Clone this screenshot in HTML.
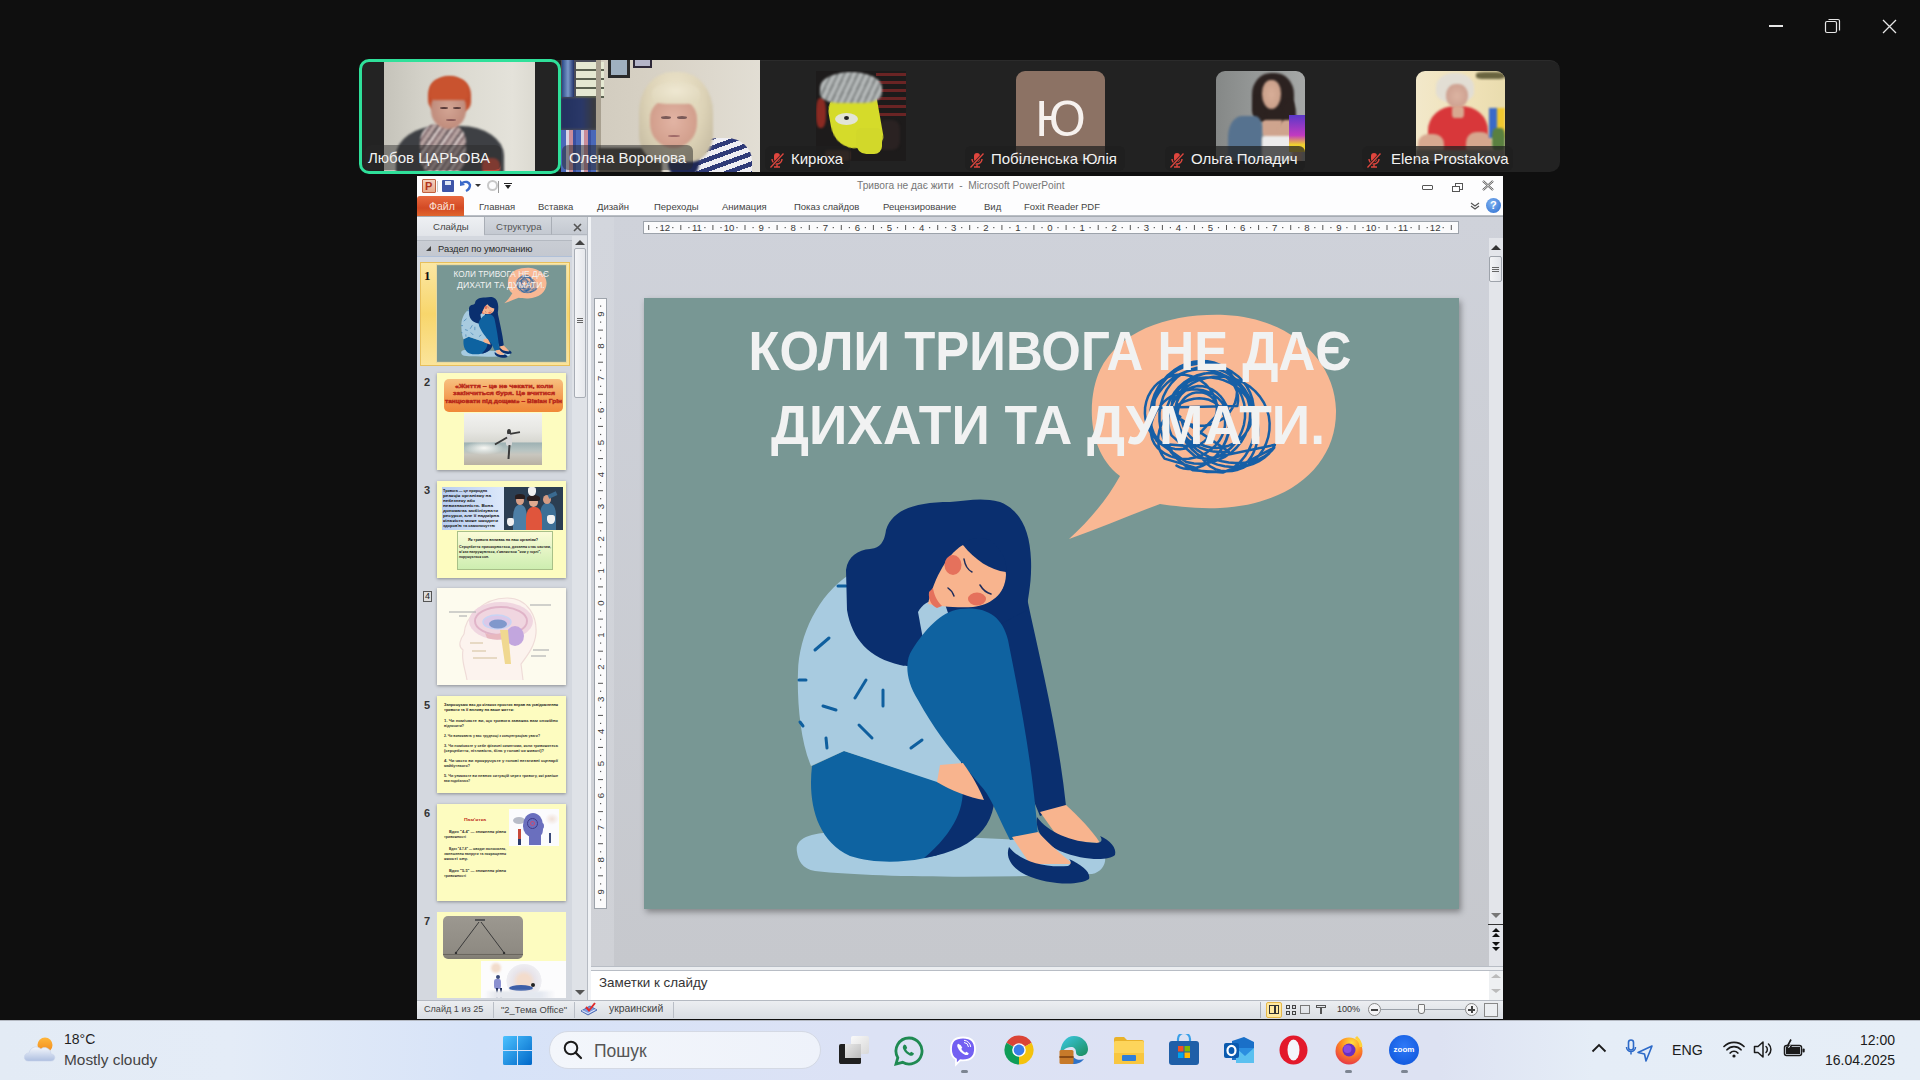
<!DOCTYPE html>
<html><head><meta charset="utf-8">
<style>
*{margin:0;padding:0;box-sizing:border-box}
html,body{width:1920px;height:1080px;overflow:hidden;background:#0f0f0f;font-family:"Liberation Sans",sans-serif;position:relative}
.a{position:absolute}
.lbl{position:absolute;height:25px;background:rgba(30,30,30,0.72);border-radius:6px;color:#f2f2f2;font-size:15px;line-height:25px;white-space:nowrap}
.mic{position:absolute;top:6px;left:4px;width:16px;height:16px}
.ribtab{position:absolute;top:200px;font-size:9.5px;color:#444;white-space:nowrap}
.num{position:absolute;left:424px;font-size:11px;font-weight:bold;color:#333}
.thumb{position:absolute;left:437px;width:129px;height:97px;background:#fdfcc0;box-shadow:0 1px 3px rgba(0,0,0,.35)}
</style></head><body>

<!-- window controls -->
<div class="a" style="left:1769px;top:25px;width:14px;height:1.5px;background:#e6e6e6"></div>
<svg class="a" style="left:1824px;top:17px" width="18" height="18" viewBox="0 0 18 18"><rect x="1.5" y="4.5" width="11" height="11" rx="1.5" fill="none" stroke="#e6e6e6" stroke-width="1.2"/><path d="M4.5 2.5h9.5a1.5 1.5 0 0 1 1.5 1.5v9.5" fill="none" stroke="#e6e6e6" stroke-width="1.2"/></svg>
<svg class="a" style="left:1882px;top:19px" width="15" height="15" viewBox="0 0 15 15"><path d="M1 1L14 14M14 1L1 14" stroke="#e6e6e6" stroke-width="1.3"/></svg>

<!-- participant panel -->
<div class="a" style="left:360px;top:60px;width:1200px;height:112px;background:#222;border-radius:10px;border-top:1px solid #2b2b2b"></div>

<!-- tile 1 -->
<div class="a" style="left:359px;top:59px;width:202px;height:115px;border:3px solid #2fe09a;border-radius:10px;background:#232323;overflow:hidden">
 <div class="a" style="left:22px;top:0;width:151px;height:109px;overflow:hidden"><div class="a" style="left:0px;top:0px;width:151px;height:109px;background:linear-gradient(90deg,#c5c3ba 0%,#d3d1c8 25%,#dddbd2 55%,#e4e2da 85%,#dcdad1 100%);border-radius:0;"></div><div class="a" style="left:12px;top:64px;width:108px;height:74px;background:#3e4044;border-radius:40% 40% 0 0;filter:blur(1px);"></div><div class="a" style="left:36px;top:62px;width:46px;height:51px;background:repeating-linear-gradient(125deg,#b8a4a2 0 4px,#5e5054 4px 6px,#d6c8c6 6px 9px,#7a6468 9px 11px);border-radius:35%;filter:blur(1.2px);"></div><div class="a" style="left:44px;top:14px;width:43px;height:37px;background:#c44e2c;border-radius:50% 50% 30% 35%;filter:blur(1px);"></div><div class="a" style="left:47px;top:30px;width:35px;height:37px;background:radial-gradient(ellipse at 50% 45%,#d3a594,#c08c7c 70%,#a87565);border-radius:40% 40% 50% 50%;filter:blur(0.8px);"></div><div class="a" style="left:46px;top:15px;width:38px;height:23px;background:#c9532f;border-radius:50% 50% 15% 15%;filter:blur(0.8px);"></div><div class="a" style="left:56px;top:45px;width:8px;height:2px;background:#5a3c3a;border-radius:50%;filter:blur(0.6px);"></div><div class="a" style="left:69px;top:45px;width:8px;height:2px;background:#5a3c3a;border-radius:50%;filter:blur(0.6px);"></div><div class="a" style="left:62px;top:57px;width:10px;height:2px;background:#8a5a58;border-radius:50%;filter:blur(0.6px);"></div><div class="a" style="left:98px;top:96px;width:18px;height:17px;background:#c74a3a;border-radius:40%;filter:blur(1px);"></div></div>
 <div class="lbl" style="left:3px;top:83px;width:136px;padding-left:3px;background:rgba(40,40,40,0.45)">Любов ЦАРЬОВА</div>
</div>
<!-- tile 2 -->
<div class="a" style="left:561px;top:60px;width:199px;height:112px;overflow:hidden"><div class="a" style="left:0px;top:0px;width:199px;height:112px;background:linear-gradient(90deg,#cfc9bc 0%,#d6d0c3 40%,#ddd8cd 75%,#e2ded4 100%);border-radius:0;"></div><div class="a" style="left:0px;top:0px;width:39px;height:112px;background:#4a4c58;border-radius:0;"></div><div class="a" style="left:1px;top:0px;width:12px;height:37px;background:linear-gradient(90deg,#2a4a88,#7a98c8 50%,#23336a);border-radius:0;filter:blur(0.5px);"></div><div class="a" style="left:15px;top:2px;width:28px;height:36px;background:repeating-linear-gradient(#e5e8d2 0 7px,#5a6050 7px 9px);border-radius:0;filter:blur(0.6px);"></div><div class="a" style="left:0px;top:38px;width:35px;height:31px;background:linear-gradient(90deg,#22305e,#2a3868 60%,#3a3a3a);border-radius:0;filter:blur(0.8px);"></div><div class="a" style="left:0px;top:70px;width:37px;height:42px;background:repeating-linear-gradient(90deg,#4a68b8 0 5px,#d8d4e4 5px 8px,#c88c9a 8px 12px,#3a50a0 12px 15px);border-radius:0;filter:blur(0.6px);"></div><div class="a" style="left:35px;top:0px;width:5px;height:112px;background:#a8a090;border-radius:0;filter:blur(0.6px);"></div><div class="a" style="left:47px;top:0px;width:22px;height:18px;background:#2a2a2a;border-radius:0;filter:blur(0.4px);"></div><div class="a" style="left:50px;top:0px;width:16px;height:15px;background:#9fb0c0;border-radius:0;filter:blur(0.5px);"></div><div class="a" style="left:72px;top:0px;width:19px;height:8px;background:#2e2838;border-radius:0;filter:blur(0.4px);"></div><div class="a" style="left:74px;top:0px;width:15px;height:6px;background:#b4b4c8;border-radius:0;filter:blur(0.5px);"></div><div class="a" style="left:37px;top:88px;width:64px;height:28px;background:#45413b;border-radius:0;filter:blur(1.2px);"></div><div class="a" style="left:129px;top:78px;width:62px;height:57px;background:repeating-linear-gradient(160deg,#efeef3 0 5px,#2f3a78 5px 9.5px);border-radius:45% 40% 0 0;filter:blur(0.7px);"></div><div class="a" style="left:107px;top:74px;width:31px;height:42px;background:#1f2856;border-radius:30%;filter:blur(0.9px);"></div><div class="a" style="left:78px;top:12px;width:74px;height:90px;background:radial-gradient(ellipse at 50% 30%,#efe7ce,#dcd2b6 55%,#c8bea4 85%);border-radius:45% 45% 30% 30%;filter:blur(1.2px);"></div><div class="a" style="left:89px;top:39px;width:47px;height:49px;background:radial-gradient(ellipse at 50% 45%,#e2b4a4,#d3a08e 65%,#bf8c7c);border-radius:40% 40% 50% 50%;filter:blur(0.9px);"></div><div class="a" style="left:91px;top:22px;width:48px;height:22px;background:radial-gradient(ellipse at 50% 40%,#efe8d2,#ddd4b8);border-radius:50% 50% 30% 30%;filter:blur(0.9px);"></div><div class="a" style="left:100px;top:56px;width:10px;height:3px;background:#7a5a58;border-radius:50%;filter:blur(0.6px);"></div><div class="a" style="left:116px;top:56px;width:10px;height:3px;background:#7a5a58;border-radius:50%;filter:blur(0.6px);"></div><div class="a" style="left:107px;top:75px;width:12px;height:2px;background:#a06a68;border-radius:50%;filter:blur(0.6px);"></div></div>
<div class="lbl" style="left:562px;top:145px;width:131px;padding-left:7px;background:rgba(40,40,40,0.5)">Олена Воронова</div>
<!-- avatar 3 -->
<div class="a" style="left:816px;top:71px;width:90px;height:90px;overflow:hidden"><div class="a" style="left:0px;top:0px;width:90px;height:90px;background:#1d1b1b;border-radius:0;"></div><div class="a" style="left:0px;top:27px;width:10px;height:30px;background:#8a2a22;border-radius:40%;filter:blur(1px);"></div><div class="a" style="left:60px;top:2px;width:30px;height:45px;background:repeating-linear-gradient(#6a2424 0 3px,#1d1b1b 3px 8px);border-radius:0;filter:blur(0.6px);"></div><div class="a" style="left:61px;top:49px;width:23px;height:30px;background:#2a2222;border-radius:30%;filter:blur(1px);"></div><div class="a" style="left:14px;top:19px;width:50px;height:58px;background:#d5db2a;border-radius:35% 25% 15% 45%;filter:blur(0.6px);transform:rotate(-10deg);"></div><div class="a" style="left:40px;top:57px;width:26px;height:26px;background:#d2d82a;border-radius:20% 20% 30% 40%;filter:blur(0.6px);"></div><div class="a" style="left:4px;top:1px;width:62px;height:31px;background:repeating-linear-gradient(115deg,#b4b8b8 0 4px,#7e8282 4px 6px);border-radius:50% 50% 30% 30%;filter:blur(0.8px);"></div><div class="a" style="left:19px;top:42px;width:23px;height:12px;background:#e2e4d6;border-radius:50%;filter:blur(0.6px);"></div><div class="a" style="left:28px;top:45px;width:5px;height:4px;background:#222;border-radius:50%;"></div><div class="a" style="left:9px;top:79px;width:25px;height:11px;background:#5a3a30;border-radius:20%;filter:blur(1px);"></div></div>
<div class="lbl" style="left:765px;top:146px;width:85px;padding-left:26px"><svg class="mic" viewBox="0 0 16 16"><rect x="5" y="1" width="6" height="9" rx="3" fill="#e0463e"/><path d="M3 7a5 5 0 0 0 10 0M8 12v3M5 15h6" stroke="#e0463e" stroke-width="1.4" fill="none"/><path d="M1.5 15.5L14.5 1.5" stroke="#1f1f1f" stroke-width="2.6"/><path d="M1.5 15.5L14.5 1.5" stroke="#e0463e" stroke-width="1.3"/></svg>Кирюха</div><!-- avatar 4 -->
<div class="a" style="left:1016px;top:71px;width:89px;height:90px;background:#8c7264;border-radius:9px 9px 0 0;color:#f6f1ee;font-size:50px;text-align:center;line-height:96px">Ю</div>
<div class="lbl" style="left:965px;top:146px;width:160px;padding-left:26px"><svg class="mic" viewBox="0 0 16 16"><rect x="5" y="1" width="6" height="9" rx="3" fill="#e0463e"/><path d="M3 7a5 5 0 0 0 10 0M8 12v3M5 15h6" stroke="#e0463e" stroke-width="1.4" fill="none"/><path d="M1.5 15.5L14.5 1.5" stroke="#1f1f1f" stroke-width="2.6"/><path d="M1.5 15.5L14.5 1.5" stroke="#e0463e" stroke-width="1.3"/></svg>Побіленська Юлія</div><!-- avatar 5 -->
<div class="a" style="left:1216px;top:71px;width:89px;height:90px;border-radius:9px 9px 0 0;overflow:hidden"><div class="a" style="left:0px;top:0px;width:89px;height:90px;background:linear-gradient(90deg,#858887,#959897 45%,#a6a8a7 100%);border-radius:0;"></div><div class="a" style="left:46px;top:37px;width:28px;height:32px;background:#cfa48e;border-radius:30%;filter:blur(1px);"></div><div class="a" style="left:36px;top:2px;width:42px;height:47px;background:#2c2220;border-radius:45% 45% 20% 20%;filter:blur(1.2px);"></div><div class="a" style="left:66px;top:29px;width:14px;height:36px;background:#2c2220;border-radius:40%;filter:blur(1.2px);"></div><div class="a" style="left:38px;top:25px;width:12px;height:26px;background:#2c2220;border-radius:40%;filter:blur(1.2px);"></div><div class="a" style="left:46px;top:9px;width:19px;height:29px;background:radial-gradient(#d8ae98,#c49a84);border-radius:45% 45% 50% 50%;filter:blur(0.8px);"></div><div class="a" style="left:12px;top:45px;width:34px;height:54px;background:#56728f;border-radius:40% 20% 0 0;filter:blur(1.2px);"></div><div class="a" style="left:62px;top:49px;width:24px;height:50px;background:#cfa48e;border-radius:30%;filter:blur(1.2px);"></div><div class="a" style="left:46px;top:65px;width:30px;height:34px;background:#ecebeb;border-radius:10%;filter:blur(1px);"></div><div class="a" style="left:73px;top:44px;width:16px;height:37px;background:linear-gradient(#5a38c8,#c23ac0 55%,#f0d030 80%);border-radius:0;filter:blur(0.7px);"></div></div>
<div class="lbl" style="left:1165px;top:146px;width:140px;padding-left:26px"><svg class="mic" viewBox="0 0 16 16"><rect x="5" y="1" width="6" height="9" rx="3" fill="#e0463e"/><path d="M3 7a5 5 0 0 0 10 0M8 12v3M5 15h6" stroke="#e0463e" stroke-width="1.4" fill="none"/><path d="M1.5 15.5L14.5 1.5" stroke="#1f1f1f" stroke-width="2.6"/><path d="M1.5 15.5L14.5 1.5" stroke="#e0463e" stroke-width="1.3"/></svg>Ольга Поладич</div><!-- avatar 6 -->
<div class="a" style="left:1416px;top:71px;width:89px;height:90px;border-radius:9px 9px 0 0;overflow:hidden"><div class="a" style="left:0px;top:0px;width:89px;height:90px;background:linear-gradient(90deg,#f2e8ca,#f0e2b8 60%,#e9dcae);border-radius:0;"></div><div class="a" style="left:60px;top:1px;width:29px;height:7px;background:#6a6440;border-radius:30%;filter:blur(1px);"></div><div class="a" style="left:12px;top:35px;width:60px;height:54px;background:#d8373a;border-radius:45% 45% 10% 10%;filter:blur(1.2px);"></div><div class="a" style="left:2px;top:63px;width:26px;height:24px;background:#d8a890;border-radius:40%;filter:blur(1.2px);"></div><div class="a" style="left:50px;top:61px;width:26px;height:26px;background:#d6a68e;border-radius:40%;filter:blur(1.2px);"></div><div class="a" style="left:20px;top:2px;width:38px;height:29px;background:#e2ded4;border-radius:48% 48% 35% 35%;filter:blur(1.2px);"></div><div class="a" style="left:30px;top:13px;width:22px;height:24px;background:radial-gradient(#dcb4a2,#c8998a);border-radius:45% 45% 50% 50%;filter:blur(0.8px);"></div><div class="a" style="left:36px;top:35px;width:12px;height:12px;background:#d8a890;border-radius:30%;filter:blur(1px);"></div><div class="a" style="left:73px;top:37px;width:16px;height:30px;background:linear-gradient(90deg,#3a6ac8 50%,#f0c830 50%);border-radius:0;filter:blur(1px);"></div><div class="a" style="left:76px;top:57px;width:13px;height:24px;background:#5a8040;border-radius:30%;filter:blur(1px);"></div><div class="a" style="left:0px;top:79px;width:89px;height:15px;background:#8c8272;border-radius:0;filter:blur(1px);"></div></div>
<div class="lbl" style="left:1362px;top:146px;width:151px;padding-left:29px"><svg class="mic" viewBox="0 0 16 16"><rect x="5" y="1" width="6" height="9" rx="3" fill="#e0463e"/><path d="M3 7a5 5 0 0 0 10 0M8 12v3M5 15h6" stroke="#e0463e" stroke-width="1.4" fill="none"/><path d="M1.5 15.5L14.5 1.5" stroke="#1f1f1f" stroke-width="2.6"/><path d="M1.5 15.5L14.5 1.5" stroke="#e0463e" stroke-width="1.3"/></svg>Elena Prostakova</div>

<!-- PowerPoint window -->
<div class="a" id="ppt" style="left:417px;top:176px;width:1086px;height:843px;background:#d2d6de;overflow:hidden">
 <!-- title bar + tabs -->
 <div class="a" style="left:0;top:0;width:1086px;height:41px;background:#fdfdfe"></div>
 <div class="a" style="left:0;top:39px;width:1086px;height:2px;background:linear-gradient(#c4c8ce,#9da2aa)"></div>
 <!-- QAT -->
 <div class="a" style="left:5px;top:3px;width:14px;height:14px;background:linear-gradient(#f3d2c0,#e9a98a);border:1px solid #c0603e;border-radius:1px"></div>
 <div class="a" style="left:8px;top:3px;font-size:11px;font-weight:bold;color:#b3331a;line-height:14px">P</div>
 <div class="a" style="left:20px;top:5px;width:1px;height:11px;background:#c7c7c7"></div>
 <div class="a" style="left:25px;top:4px;width:12px;height:12px;background:#3e55a8;border-radius:1px"></div>
 <div class="a" style="left:28px;top:5px;width:6px;height:4px;background:#dfe6f5"></div>
 <svg class="a" style="left:42px;top:3px" width="14" height="14" viewBox="0 0 14 14"><path d="M3 4 Q9 1 11 6 Q11 10 7 12" fill="none" stroke="#3a69c9" stroke-width="2.4"/><path d="M1 1 L1 7 L6 6 Z" fill="#3a69c9"/></svg>
 <div class="a" style="left:58px;top:8px;width:0;height:0;border-left:3px solid transparent;border-right:3px solid transparent;border-top:3px solid #333"></div>
 <div class="a" style="left:70px;top:4px;width:11px;height:11px;border:2.5px solid #c8c8c8;border-radius:50%"></div>
 <div class="a" style="left:81px;top:5px;width:1px;height:12px;background:#999"></div>
 <div class="a" style="left:87px;top:7px;width:8px;height:1px;background:#222"></div>
 <div class="a" style="left:88px;top:9px;width:0;height:0;border-left:3px solid transparent;border-right:3px solid transparent;border-top:4px solid #222"></div>
 <div class="a" style="left:440px;top:4px;font-size:10.2px;color:#777;white-space:nowrap">Тривога не дає жити &nbsp;- &nbsp;Microsoft PowerPoint</div>
 <!-- window buttons -->
 <div class="a" style="left:1005px;top:9px;width:11px;height:5px;border:1px solid #555;border-radius:1px"></div>
 <div class="a" style="left:1038px;top:7px;width:8px;height:7px;border:1px solid #555"></div>
 <div class="a" style="left:1035px;top:10px;width:8px;height:6px;border:1px solid #555;background:#fdfdfe"></div>
 <svg class="a" style="left:1065px;top:4px" width="12" height="11" viewBox="0 0 12 11"><path d="M1 1L11 10M11 1L1 10" stroke="#555" stroke-width="2.2"/><path d="M1 1L11 10M11 1L1 10" stroke="#fff" stroke-width="0.8"/></svg>
 <!-- tabs -->
 <div class="a" style="left:0;top:20px;width:47px;height:20px;background:linear-gradient(#e8693f,#d34a24 60%,#e0662d);border-radius:3px 3px 0 0"></div>
 <div class="a" style="left:12px;top:24px;font-size:10.5px;color:#fbe3d8">Файл</div>
 <div class="ribtab" style="margin-top:1px;left:62px;top:24px">Главная</div>
 <div class="ribtab" style="margin-top:1px;left:121px;top:24px">Вставка</div>
 <div class="ribtab" style="margin-top:1px;left:180px;top:24px">Дизайн</div>
 <div class="ribtab" style="margin-top:1px;left:237px;top:24px">Переходы</div>
 <div class="ribtab" style="margin-top:1px;left:305px;top:24px">Анимация</div>
 <div class="ribtab" style="margin-top:1px;left:377px;top:24px">Показ слайдов</div>
 <div class="ribtab" style="margin-top:1px;left:466px;top:24px">Рецензирование</div>
 <div class="ribtab" style="margin-top:1px;left:567px;top:24px">Вид</div>
 <div class="ribtab" style="margin-top:1px;left:607px;top:24px">Foxit Reader PDF</div>
 <svg class="a" style="left:1053px;top:25px" width="10" height="10" viewBox="0 0 10 10"><path d="M1 2L5 5L9 2M1 5L5 8L9 5" fill="none" stroke="#555" stroke-width="1.2"/></svg>
 <div class="a" style="left:1069px;top:22px;width:15px;height:15px;border-radius:50%;background:radial-gradient(circle at 40% 35%,#7fb2f0,#2a6cd0)"></div>
 <div class="a" style="left:1073px;top:23px;font-size:11px;font-weight:bold;color:#fff">?</div>

 <!-- left panel -->
 <div class="a" style="left:0;top:41px;width:170px;height:783px;background:#d4d8df"></div>
 <div class="a" style="left:0;top:41px;width:67px;height:19px;background:linear-gradient(#eef0f3,#e1e4e9)"></div>
 <div class="a" style="left:67px;top:41px;width:68px;height:18px;background:linear-gradient(#d3d7dd,#c4c9d1);border-left:1px solid #a9aeb6;border-right:1px solid #a9aeb6;border-bottom:1px solid #b3b8c0"></div>
 <div class="a" style="left:135px;top:41px;width:35px;height:18px;background:linear-gradient(#d3d7dd,#c4c9d1);border-bottom:1px solid #b3b8c0"></div>
 <div class="a" style="left:16px;top:45px;font-size:9.6px;color:#444">Слайды</div>
 <div class="a" style="left:79px;top:45px;font-size:9.6px;color:#555">Структура</div>
 <svg class="a" style="left:156px;top:47px" width="9" height="9" viewBox="0 0 9 9"><path d="M1 1L8 8M8 1L1 8" stroke="#555" stroke-width="1.6"/></svg>
 <div class="a" style="left:0;top:64px;width:155px;height:17px;background:linear-gradient(#c9cdd4,#c4c8d0);border-top:1px solid #b4b9c1;border-bottom:1px solid #b0c0d8"></div>
 <div class="a" style="left:9px;top:70px;width:0;height:0;border-left:5px solid transparent;border-bottom:5px solid #444"></div>
 <div class="a" style="left:21px;top:68px;font-size:9.3px;color:#2a2a2a;white-space:nowrap">Раздел по умолчанию</div>
 <!-- slides scrollbar -->
 <div class="a" style="left:155px;top:60px;width:15px;height:764px;background:#dfe2e7"></div>
 <div class="a" style="left:158px;top:64px;width:0;height:0;border-left:5px solid transparent;border-right:5px solid transparent;border-bottom:5px solid #444"></div>
 <div class="a" style="left:157px;top:72px;width:12px;height:150px;background:linear-gradient(90deg,#f4f5f7,#e6e8ec);border:1px solid #a8adb5;border-radius:2px"></div>
 <div class="a" style="left:160px;top:142px;width:6px;height:1px;background:#666;box-shadow:0 2px 0 #666,0 4px 0 #666"></div>
 <div class="a" style="left:158px;top:814px;width:0;height:0;border-left:5px solid transparent;border-right:5px solid transparent;border-top:5px solid #555"></div>
 <div class="a" style="left:170px;top:41px;width:4px;height:783px;background:#f1f3f6;border-left:1px solid #b6bbc3"></div>

 <!-- main area -->
 <div class="a" style="left:174px;top:41px;width:912px;height:749px;background:linear-gradient(#cfd2da,#c6c8cd)"></div>
 <div class="a" style="left:174px;top:41px;width:23px;height:749px;background:linear-gradient(#d3d6dd,#cfd1d6)"></div>
 <!-- rulers -->
 <div class="a" id="hruler" style="left:226px;top:45px;width:816px;height:13px;background:#fbfbfc;border:1px solid #9da3ab"></div>
 <div class="a" id="vruler" style="left:177px;top:122px;width:13px;height:611px;background:#fbfbfc;border:1px solid #9da3ab"></div>
 <svg class="a" style="left:227px;top:46px" width="814" height="11" font-family="Liberation Sans" font-size="9.6" fill="#3a3a3a"><rect x="4.2" y="3" width="1" height="5" fill="#555"/><rect x="12.2" y="5" width="1.2" height="1.2" fill="#555"/><text x="20.8" y="9.3" text-anchor="middle">12</text><rect x="28.2" y="5" width="1.2" height="1.2" fill="#555"/><rect x="36.3" y="3" width="1" height="5" fill="#555"/><rect x="44.3" y="5" width="1.2" height="1.2" fill="#555"/><text x="52.9" y="9.3" text-anchor="middle">11</text><rect x="60.3" y="5" width="1.2" height="1.2" fill="#555"/><rect x="68.4" y="3" width="1" height="5" fill="#555"/><rect x="76.4" y="5" width="1.2" height="1.2" fill="#555"/><text x="85.0" y="9.3" text-anchor="middle">10</text><rect x="92.4" y="5" width="1.2" height="1.2" fill="#555"/><rect x="100.5" y="3" width="1" height="5" fill="#555"/><rect x="108.5" y="5" width="1.2" height="1.2" fill="#555"/><text x="117.1" y="9.3" text-anchor="middle">9</text><rect x="124.5" y="5" width="1.2" height="1.2" fill="#555"/><rect x="132.6" y="3" width="1" height="5" fill="#555"/><rect x="140.6" y="5" width="1.2" height="1.2" fill="#555"/><text x="149.2" y="9.3" text-anchor="middle">8</text><rect x="156.6" y="5" width="1.2" height="1.2" fill="#555"/><rect x="164.8" y="3" width="1" height="5" fill="#555"/><rect x="172.7" y="5" width="1.2" height="1.2" fill="#555"/><text x="181.3" y="9.3" text-anchor="middle">7</text><rect x="188.7" y="5" width="1.2" height="1.2" fill="#555"/><rect x="196.8" y="3" width="1" height="5" fill="#555"/><rect x="204.8" y="5" width="1.2" height="1.2" fill="#555"/><text x="213.4" y="9.3" text-anchor="middle">6</text><rect x="220.8" y="5" width="1.2" height="1.2" fill="#555"/><rect x="228.9" y="3" width="1" height="5" fill="#555"/><rect x="236.9" y="5" width="1.2" height="1.2" fill="#555"/><text x="245.5" y="9.3" text-anchor="middle">5</text><rect x="252.9" y="5" width="1.2" height="1.2" fill="#555"/><rect x="261.1" y="3" width="1" height="5" fill="#555"/><rect x="269.0" y="5" width="1.2" height="1.2" fill="#555"/><text x="277.6" y="9.3" text-anchor="middle">4</text><rect x="285.0" y="5" width="1.2" height="1.2" fill="#555"/><rect x="293.2" y="3" width="1" height="5" fill="#555"/><rect x="301.1" y="5" width="1.2" height="1.2" fill="#555"/><text x="309.7" y="9.3" text-anchor="middle">3</text><rect x="317.1" y="5" width="1.2" height="1.2" fill="#555"/><rect x="325.2" y="3" width="1" height="5" fill="#555"/><rect x="333.2" y="5" width="1.2" height="1.2" fill="#555"/><text x="341.8" y="9.3" text-anchor="middle">2</text><rect x="349.2" y="5" width="1.2" height="1.2" fill="#555"/><rect x="357.4" y="3" width="1" height="5" fill="#555"/><rect x="365.3" y="5" width="1.2" height="1.2" fill="#555"/><text x="373.9" y="9.3" text-anchor="middle">1</text><rect x="381.3" y="5" width="1.2" height="1.2" fill="#555"/><rect x="389.4" y="3" width="1" height="5" fill="#555"/><rect x="397.4" y="5" width="1.2" height="1.2" fill="#555"/><text x="406.0" y="9.3" text-anchor="middle">0</text><rect x="413.4" y="5" width="1.2" height="1.2" fill="#555"/><rect x="421.6" y="3" width="1" height="5" fill="#555"/><rect x="429.5" y="5" width="1.2" height="1.2" fill="#555"/><text x="438.1" y="9.3" text-anchor="middle">1</text><rect x="445.5" y="5" width="1.2" height="1.2" fill="#555"/><rect x="453.7" y="3" width="1" height="5" fill="#555"/><rect x="461.6" y="5" width="1.2" height="1.2" fill="#555"/><text x="470.2" y="9.3" text-anchor="middle">2</text><rect x="477.6" y="5" width="1.2" height="1.2" fill="#555"/><rect x="485.8" y="3" width="1" height="5" fill="#555"/><rect x="493.7" y="5" width="1.2" height="1.2" fill="#555"/><text x="502.3" y="9.3" text-anchor="middle">3</text><rect x="509.7" y="5" width="1.2" height="1.2" fill="#555"/><rect x="517.9" y="3" width="1" height="5" fill="#555"/><rect x="525.8" y="5" width="1.2" height="1.2" fill="#555"/><text x="534.4" y="9.3" text-anchor="middle">4</text><rect x="541.8" y="5" width="1.2" height="1.2" fill="#555"/><rect x="549.9" y="3" width="1" height="5" fill="#555"/><rect x="557.9" y="5" width="1.2" height="1.2" fill="#555"/><text x="566.5" y="9.3" text-anchor="middle">5</text><rect x="573.9" y="5" width="1.2" height="1.2" fill="#555"/><rect x="582.0" y="3" width="1" height="5" fill="#555"/><rect x="590.0" y="5" width="1.2" height="1.2" fill="#555"/><text x="598.6" y="9.3" text-anchor="middle">6</text><rect x="606.0" y="5" width="1.2" height="1.2" fill="#555"/><rect x="614.1" y="3" width="1" height="5" fill="#555"/><rect x="622.1" y="5" width="1.2" height="1.2" fill="#555"/><text x="630.7" y="9.3" text-anchor="middle">7</text><rect x="638.1" y="5" width="1.2" height="1.2" fill="#555"/><rect x="646.2" y="3" width="1" height="5" fill="#555"/><rect x="654.2" y="5" width="1.2" height="1.2" fill="#555"/><text x="662.8" y="9.3" text-anchor="middle">8</text><rect x="670.2" y="5" width="1.2" height="1.2" fill="#555"/><rect x="678.3" y="3" width="1" height="5" fill="#555"/><rect x="686.3" y="5" width="1.2" height="1.2" fill="#555"/><text x="694.9" y="9.3" text-anchor="middle">9</text><rect x="702.3" y="5" width="1.2" height="1.2" fill="#555"/><rect x="710.5" y="3" width="1" height="5" fill="#555"/><rect x="718.4" y="5" width="1.2" height="1.2" fill="#555"/><text x="727.0" y="9.3" text-anchor="middle">10</text><rect x="734.4" y="5" width="1.2" height="1.2" fill="#555"/><rect x="742.5" y="3" width="1" height="5" fill="#555"/><rect x="750.5" y="5" width="1.2" height="1.2" fill="#555"/><text x="759.1" y="9.3" text-anchor="middle">11</text><rect x="766.5" y="5" width="1.2" height="1.2" fill="#555"/><rect x="774.6" y="3" width="1" height="5" fill="#555"/><rect x="782.6" y="5" width="1.2" height="1.2" fill="#555"/><text x="791.2" y="9.3" text-anchor="middle">12</text><rect x="798.6" y="5" width="1.2" height="1.2" fill="#555"/><rect x="806.8" y="3" width="1" height="5" fill="#555"/></svg>
<svg class="a" style="left:178px;top:123px" width="11" height="609" font-family="Liberation Sans" font-size="9.6" fill="#3a3a3a"><rect x="5" y="6.5" width="1.2" height="1.2" fill="#555"/><text x="0" y="0" transform="translate(9.3 15.1) rotate(-90)" text-anchor="middle">9</text><rect x="5" y="22.5" width="1.2" height="1.2" fill="#555"/><rect x="3" y="30.6" width="5" height="1" fill="#555"/><rect x="5" y="38.6" width="1.2" height="1.2" fill="#555"/><text x="0" y="0" transform="translate(9.3 47.2) rotate(-90)" text-anchor="middle">8</text><rect x="5" y="54.6" width="1.2" height="1.2" fill="#555"/><rect x="3" y="62.7" width="5" height="1" fill="#555"/><rect x="5" y="70.7" width="1.2" height="1.2" fill="#555"/><text x="0" y="0" transform="translate(9.3 79.3) rotate(-90)" text-anchor="middle">7</text><rect x="5" y="86.7" width="1.2" height="1.2" fill="#555"/><rect x="3" y="94.8" width="5" height="1" fill="#555"/><rect x="5" y="102.8" width="1.2" height="1.2" fill="#555"/><text x="0" y="0" transform="translate(9.3 111.4) rotate(-90)" text-anchor="middle">6</text><rect x="5" y="118.8" width="1.2" height="1.2" fill="#555"/><rect x="3" y="126.9" width="5" height="1" fill="#555"/><rect x="5" y="134.9" width="1.2" height="1.2" fill="#555"/><text x="0" y="0" transform="translate(9.3 143.5) rotate(-90)" text-anchor="middle">5</text><rect x="5" y="150.9" width="1.2" height="1.2" fill="#555"/><rect x="3" y="159.1" width="5" height="1" fill="#555"/><rect x="5" y="167.0" width="1.2" height="1.2" fill="#555"/><text x="0" y="0" transform="translate(9.3 175.6) rotate(-90)" text-anchor="middle">4</text><rect x="5" y="183.0" width="1.2" height="1.2" fill="#555"/><rect x="3" y="191.2" width="5" height="1" fill="#555"/><rect x="5" y="199.1" width="1.2" height="1.2" fill="#555"/><text x="0" y="0" transform="translate(9.3 207.7) rotate(-90)" text-anchor="middle">3</text><rect x="5" y="215.1" width="1.2" height="1.2" fill="#555"/><rect x="3" y="223.2" width="5" height="1" fill="#555"/><rect x="5" y="231.2" width="1.2" height="1.2" fill="#555"/><text x="0" y="0" transform="translate(9.3 239.8) rotate(-90)" text-anchor="middle">2</text><rect x="5" y="247.2" width="1.2" height="1.2" fill="#555"/><rect x="3" y="255.4" width="5" height="1" fill="#555"/><rect x="5" y="263.3" width="1.2" height="1.2" fill="#555"/><text x="0" y="0" transform="translate(9.3 271.9) rotate(-90)" text-anchor="middle">1</text><rect x="5" y="279.3" width="1.2" height="1.2" fill="#555"/><rect x="3" y="287.4" width="5" height="1" fill="#555"/><rect x="5" y="295.4" width="1.2" height="1.2" fill="#555"/><text x="0" y="0" transform="translate(9.3 304.0) rotate(-90)" text-anchor="middle">0</text><rect x="5" y="311.4" width="1.2" height="1.2" fill="#555"/><rect x="3" y="319.6" width="5" height="1" fill="#555"/><rect x="5" y="327.5" width="1.2" height="1.2" fill="#555"/><text x="0" y="0" transform="translate(9.3 336.1) rotate(-90)" text-anchor="middle">1</text><rect x="5" y="343.5" width="1.2" height="1.2" fill="#555"/><rect x="3" y="351.7" width="5" height="1" fill="#555"/><rect x="5" y="359.6" width="1.2" height="1.2" fill="#555"/><text x="0" y="0" transform="translate(9.3 368.2) rotate(-90)" text-anchor="middle">2</text><rect x="5" y="375.6" width="1.2" height="1.2" fill="#555"/><rect x="3" y="383.8" width="5" height="1" fill="#555"/><rect x="5" y="391.7" width="1.2" height="1.2" fill="#555"/><text x="0" y="0" transform="translate(9.3 400.3) rotate(-90)" text-anchor="middle">3</text><rect x="5" y="407.7" width="1.2" height="1.2" fill="#555"/><rect x="3" y="415.9" width="5" height="1" fill="#555"/><rect x="5" y="423.8" width="1.2" height="1.2" fill="#555"/><text x="0" y="0" transform="translate(9.3 432.4) rotate(-90)" text-anchor="middle">4</text><rect x="5" y="439.8" width="1.2" height="1.2" fill="#555"/><rect x="3" y="447.9" width="5" height="1" fill="#555"/><rect x="5" y="455.9" width="1.2" height="1.2" fill="#555"/><text x="0" y="0" transform="translate(9.3 464.5) rotate(-90)" text-anchor="middle">5</text><rect x="5" y="471.9" width="1.2" height="1.2" fill="#555"/><rect x="3" y="480.1" width="5" height="1" fill="#555"/><rect x="5" y="488.0" width="1.2" height="1.2" fill="#555"/><text x="0" y="0" transform="translate(9.3 496.6) rotate(-90)" text-anchor="middle">6</text><rect x="5" y="504.0" width="1.2" height="1.2" fill="#555"/><rect x="3" y="512.1" width="5" height="1" fill="#555"/><rect x="5" y="520.1" width="1.2" height="1.2" fill="#555"/><text x="0" y="0" transform="translate(9.3 528.7) rotate(-90)" text-anchor="middle">7</text><rect x="5" y="536.1" width="1.2" height="1.2" fill="#555"/><rect x="3" y="544.2" width="5" height="1" fill="#555"/><rect x="5" y="552.2" width="1.2" height="1.2" fill="#555"/><text x="0" y="0" transform="translate(9.3 560.8) rotate(-90)" text-anchor="middle">8</text><rect x="5" y="568.2" width="1.2" height="1.2" fill="#555"/><rect x="3" y="576.3" width="5" height="1" fill="#555"/><rect x="5" y="584.3" width="1.2" height="1.2" fill="#555"/><text x="0" y="0" transform="translate(9.3 592.9) rotate(-90)" text-anchor="middle">9</text><rect x="5" y="600.3" width="1.2" height="1.2" fill="#555"/></svg>
 <!-- main scrollbar -->
 <div class="a" style="left:1072px;top:62px;width:14px;height:728px;background:#e3e5ea"></div>
 <div class="a" style="left:1074px;top:69px;width:0;height:0;border-left:5px solid transparent;border-right:5px solid transparent;border-bottom:5px solid #333"></div>
 <div class="a" style="left:1072px;top:80px;width:13px;height:26px;background:linear-gradient(90deg,#f3f4f6,#e2e4e9);border:1px solid #9ea3ab;border-radius:2px"></div>
 <div class="a" style="left:1075px;top:91px;width:7px;height:1px;background:#666;box-shadow:0 2px 0 #666,0 4px 0 #666"></div>
 <div class="a" style="left:1074px;top:737px;width:0;height:0;border-left:5px solid transparent;border-right:5px solid transparent;border-top:5px solid #777"></div>
 <div class="a" style="left:1071px;top:748px;width:15px;height:1px;background:#333"></div>
 <svg class="a" style="left:1074px;top:752px" width="10" height="24" viewBox="0 0 10 24"><path d="M5 0L9 4H1Z M5 5L9 9H1Z M1 14H9L5 18Z M1 19H9L5 23Z" fill="#111"/></svg>
 <div class="a" style="left:227px;top:122px;width:815px;height:611px;box-shadow:2px 3px 6px rgba(0,0,0,0.35)"></div>
 <svg class="a" style="left:227px;top:122px" width="815" height="611" viewBox="644 298 815 611" font-weight="bold"><g id="slideart">
  <rect x="644" y="298" width="815" height="611" fill="#789794"/>
  <!-- bubble -->
  <path d="M1120,476 C1085,450 1088,395 1100,370 C1120,330 1170,313 1225,315 C1290,318 1335,360 1336,410 C1337,465 1290,505 1220,508 C1195,509 1175,506 1160,504 C1130,515 1100,528 1069,539 C1090,520 1108,498 1120,476 Z" fill="#f9b894"/>
  <g fill="none" stroke="#165fa6" stroke-width="2.5" stroke-linecap="round" stroke-linejoin="round"><path d="M1215.5,471.7 L1207.1,471.9 L1199.0,470.6 L1191.1,468.0 L1183.8,464.0 L1177.2,458.9 L1171.5,452.7 L1166.8,445.7 L1163.1,438.0 L1160.7,429.8 L1159.5,421.4 L1159.5,412.9 L1160.8,404.7 L1163.2,396.8 L1166.8,389.6 L1171.4,383.1 L1176.8,377.6 L1183.1,373.1 L1189.9,369.8 L1197.1,367.8 L1204.5,367.1 L1212.0,367.7 L1219.4,369.5 L1226.4,372.7 L1232.9,376.9 L1238.9,382.2 L1244.0,388.5 L1248.3,395.4 L1251.5,403.0 L1253.8,410.9 L1254.9,419.1 L1255.0,427.3 L1253.9,435.2 L1251.9,442.9 L1248.8,449.9 L1244.9,456.3 L1240.2,461.9 L1234.9,466.5 L1229.0,470.0 L1222.8,472.5 L1193.1,470.3 L1186.7,466.8 L1180.9,462.3 L1175.7,456.9 L1171.4,450.7 L1168.1,443.9 L1165.7,436.6 L1164.5,429.0 L1164.3,421.3 L1165.2,413.6 L1167.3,406.2 L1170.3,399.1 L1174.3,392.6 L1179.1,386.9 L1184.7,382.0 L1190.9,378.1 L1197.4,375.2 L1204.3,373.5 L1211.2,372.9 L1218.0,373.6 L1224.6,375.4 L1230.7,378.3 L1236.2,382.2 L1240.9,387.1 L1244.8,392.8 L1247.7,399.2 L1249.5,406.0 L1250.2,413.2 L1249.7,420.6 L1248.1,427.8 L1245.3,434.9 L1241.5,441.5 L1236.6,447.5 L1230.9,452.8 L1224.4,457.1 L1217.3,460.4 L1209.8,462.6 L1201.9,463.7 L1194.0,463.4 L1186.2,462.0 L1156.7,441.1 L1153.4,433.8 L1151.3,426.1 L1150.3,418.2 L1150.6,410.1 L1152.0,402.2 L1154.5,394.6 L1158.1,387.5 L1162.6,381.0 L1167.9,375.2 L1173.9,370.4 L1180.3,366.4 L1187.0,363.5 L1193.9,361.7 L1200.8,360.9 L1207.4,361.2 L1213.7,362.5 L1219.4,364.7 L1224.5,367.7 L1228.9,371.6 L1232.3,376.0 L1234.9,380.9 L1236.4,386.1 L1237.0,391.6 L1236.5,397.0 L1235.1,402.4 L1232.8,407.4 L1229.7,412.1 L1225.8,416.2 L1221.3,419.7 L1216.3,422.4 L1210.9,424.4 L1205.3,425.5 L1199.6,425.8 L1193.9,425.2 L1188.5,423.8 L1183.4,421.6 L1178.7,418.6 L1174.5,414.9 L1171.0,410.7 L1180.3,416.8 L1177.5,415.5 L1175.1,413.6 L1173.4,411.2 L1172.3,408.2 L1171.9,404.9 L1172.3,401.3 L1173.4,397.6 L1175.2,393.9 L1177.8,390.3 L1181.1,386.9 L1185.0,383.9 L1189.6,381.4 L1194.6,379.4 L1200.0,378.0 L1205.7,377.4 L1211.6,377.5 L1217.5,378.4 L1223.4,380.1 L1229.1,382.5 L1234.6,385.7 L1239.7,389.6 L1244.2,394.2 L1248.3,399.3 L1251.7,404.8 L1254.4,410.7 L1256.4,416.9 L1257.7,423.2 L1258.2,429.5 L1258.0,435.7 L1257.2,441.6 L1255.7,447.2 L1253.6,452.4 L1251.1,457.0 L1248.2,461.0 L1245.0,464.3 L1241.6,466.8 L1238.1,468.7 L1234.8,469.7 L1231.5,470.0 L1274.2,447.6 L1271.5,450.9 L1268.1,453.9 L1264.0,456.7 L1259.2,459.1 L1253.9,461.0 L1248.1,462.3 L1241.8,463.0 L1235.4,463.1 L1228.7,462.6 L1222.0,461.3 L1215.4,459.5 L1209.1,456.9 L1203.0,453.8 L1197.4,450.1 L1192.4,446.0 L1188.0,441.4 L1184.3,436.6 L1181.4,431.6 L1179.2,426.5 L1177.9,421.4 L1177.4,416.4 L1177.7,411.7 L1178.8,407.3 L1180.5,403.3 L1182.9,399.9 L1185.8,397.0 L1189.0,394.8 L1192.6,393.2 L1196.4,392.4 L1200.1,392.2 L1203.8,392.8 L1207.3,394.1 L1210.3,395.9 L1212.9,398.4 L1215.0,401.4 L1216.3,404.7 L1216.9,408.4 L1216.7,412.3 L1215.6,416.3 L1185.2,448.6 L1180.0,449.2 L1174.8,448.9 L1169.6,447.7 L1164.6,445.6 L1160.0,442.7 L1155.8,439.1 L1152.2,434.8 L1149.2,430.0 L1146.9,424.8 L1145.5,419.2 L1144.9,413.4 L1145.1,407.6 L1146.2,401.9 L1148.1,396.4 L1150.9,391.3 L1154.3,386.7 L1158.4,382.7 L1163.1,379.5 L1168.2,377.0 L1173.6,375.3 L1179.2,374.6 L1184.9,374.8 L1190.5,375.9 L1195.9,377.8 L1200.9,380.7 L1205.5,384.2 L1209.4,388.5 L1212.7,393.4 L1215.2,398.7 L1216.9,404.3 L1217.8,410.1 L1217.7,416.0 L1216.8,421.8 L1215.0,427.3 L1212.3,432.4 L1208.9,437.0 L1204.8,441.0 L1200.2,444.3 L1195.1,446.7 L1163.5,443.9 L1159.7,441.2 L1156.5,437.6 L1153.8,433.3 L1151.9,428.3 L1150.8,422.9 L1150.6,417.0 L1151.2,411.0 L1152.8,404.8 L1155.3,398.7 L1158.6,392.9 L1162.8,387.4 L1167.7,382.4 L1173.2,378.0 L1179.3,374.4 L1185.9,371.7 L1192.7,369.9 L1199.6,369.1 L1206.5,369.4 L1213.2,370.7 L1219.6,372.9 L1225.6,376.2 L1230.9,380.4 L1235.5,385.4 L1239.3,391.0 L1242.2,397.3 L1244.2,403.9 L1245.1,410.8 L1245.0,417.9 L1243.9,424.8 L1241.8,431.4 L1238.8,437.7 L1234.9,443.4 L1230.4,448.3 L1225.2,452.4 L1219.6,455.5 L1213.7,457.6 L1207.6,458.5 L1201.6,458.3 L1195.8,457.0 L1171.5,435.4 L1169.3,429.5 L1168.3,423.2 L1168.5,416.7 L1169.9,410.2 L1172.3,403.8 L1175.9,397.8 L1180.4,392.3 L1185.8,387.5 L1192.0,383.4 L1198.8,380.2 L1206.1,378.0 L1213.6,376.7 L1221.2,376.6 L1228.8,377.5 L1236.1,379.4 L1243.0,382.4 L1249.4,386.3 L1255.1,391.1 L1259.9,396.6 L1263.9,402.7 L1266.8,409.3 L1268.8,416.2 L1269.6,423.2 L1269.4,430.3 L1268.2,437.2 L1266.0,443.8 L1262.9,449.9 L1259.0,455.5 L1254.4,460.3 L1249.3,464.4 L1243.7,467.5 L1237.9,469.7 L1232.0,471.0 L1226.2,471.3 L1220.6,470.7 L1215.4,469.1 L1210.7,466.7 L1206.6,463.5 L1203.3,459.7 L1274.9,444.8 L1272.2,449.6 L1268.5,454.1 L1263.9,458.0 L1258.6,461.4 L1252.7,464.1 L1246.1,466.0 L1239.2,467.0 L1232.0,467.1 L1224.7,466.3 L1217.4,464.6 L1210.3,461.9 L1203.6,458.4 L1197.3,454.1 L1191.7,449.0 L1186.8,443.3 L1182.7,437.2 L1179.5,430.7 L1177.3,423.9 L1176.0,417.0 L1175.8,410.3 L1176.5,403.7 L1178.2,397.5 L1180.8,391.7 L1184.1,386.6 L1188.1,382.2 L1192.7,378.6 L1197.7,375.8 L1203.0,374.0 L1208.4,373.1 L1213.7,373.2 L1218.9,374.2 L1223.7,376.0 L1228.0,378.7 L1231.7,382.2 L1234.6,386.2 L1236.7,390.8 L1237.9,395.7 L1238.1,400.9 L1237.3,406.1 L1154.1,407.7 L1154.5,401.6 L1155.9,395.6 L1158.3,389.7 L1161.6,384.1 L1165.9,378.9 L1171.0,374.3 L1176.8,370.4 L1183.2,367.3 L1190.1,365.1 L1197.2,363.8 L1204.6,363.5 L1211.9,364.1 L1219.1,365.8 L1225.9,368.4 L1232.2,371.9 L1238.0,376.2 L1242.9,381.2 L1247.0,386.8 L1250.2,392.8 L1252.4,399.2 L1253.5,405.7 L1253.6,412.3 L1252.6,418.6 L1250.7,424.7 L1247.7,430.3 L1244.0,435.4 L1239.4,439.7 L1234.3,443.1 L1228.7,445.7 L1222.7,447.3 L1216.6,447.9 L1210.5,447.5 L1204.6,446.0 L1199.1,443.6 L1194.0,440.2 L1189.6,436.0 L1185.9,431.1 L1183.2,425.6 L1181.4,419.6 L1228.8,451.6 L1221.1,452.1 L1213.6,451.6 L1206.4,450.0 L1199.7,447.5 L1193.6,444.1 L1188.2,440.0 L1183.7,435.3 L1180.0,430.2 L1177.4,424.7 L1175.7,419.1 L1175.0,413.5 L1175.3,408.1 L1176.5,403.1 L1178.5,398.4 L1181.3,394.4 L1184.8,391.1 L1188.8,388.6 L1193.2,386.9 L1197.8,386.1 L1202.6,386.3 L1207.3,387.4 L1211.9,389.4 L1216.2,392.2 L1220.1,395.8 L1223.4,400.1 L1226.2,405.0 L1228.2,410.4 L1229.4,416.2 L1229.9,422.2 L1229.5,428.2 L1228.3,434.3 L1226.3,440.2 L1223.6,445.8 L1220.2,451.0 L1216.2,455.7 L1211.6,459.8 L1206.6,463.2 L1201.4,465.9 L1195.9,467.9 L1164.5,458.6 L1162.0,454.9 L1160.0,450.8 L1158.7,446.2 L1158.2,441.4 L1158.3,436.3 L1159.2,431.2 L1160.8,426.0 L1163.1,421.1 L1166.2,416.3 L1169.8,411.9 L1173.9,408.0 L1178.5,404.7 L1183.5,401.9 L1188.7,400.0 L1193.9,398.7 L1199.1,398.3 L1204.2,398.7 L1209.0,399.8 L1213.3,401.8 L1217.1,404.5 L1220.3,407.8 L1222.7,411.7 L1224.3,416.1 L1225.1,420.9 L1225.0,425.8 L1223.9,430.9 L1222.0,435.9 L1219.2,440.8 L1215.6,445.3 L1211.3,449.3 L1206.3,452.8 L1200.8,455.6 L1195.0,457.6 L1188.8,458.7 L1182.6,458.9 L1176.5,458.1 L1170.6,456.4 L1165.0,453.7 L1160.0,450.1 L1157.5,447.8 L1154.4,443.7 L1152.2,439.1 L1151.0,434.0 L1150.7,428.6 L1151.5,423.0 L1153.2,417.5 L1155.7,412.1 L1159.2,407.0 L1163.3,402.4 L1168.1,398.3 L1173.5,394.9 L1179.2,392.3 L1185.1,390.5 L1191.2,389.5 L1197.1,389.5 L1202.9,390.3 L1208.4,392.1 L1213.4,394.7 L1217.9,398.0 L1221.7,402.1 L1224.8,406.8 L1227.0,411.9 L1228.4,417.5 L1229.0,423.3 L1228.7,429.2 L1227.6,435.1 L1225.7,440.8 L1223.1,446.3 L1219.8,451.3 L1216.0,455.9 L1211.7,459.9 L1207.2,463.2 L1202.4,465.8 L1197.6,467.7 L1192.8,468.8 L1188.2,469.1 L1183.8,468.6 L1179.9,467.4 L1176.5,465.6"/></g>
  <!-- floor shadow -->
  <path d="M797,852 C794,836 815,831 850,832 L1090,843 C1110,846 1110,870 1092,874 C1000,878 880,878 815,871 C802,869 798,860 797,852 Z" fill="#a7cbe0"/>
  <!-- back leg navy -->
  <path d="M1000,590 L1027,598 C1040,660 1058,730 1066,806 L1040,816 C1030,790 1015,760 1000,740 C995,790 980,835 935,856 C965,800 960,760 955,700 Z" fill="#0a2f6f"/>
  <!-- buttocks -->
  <path d="M812,766 C808,800 815,840 850,856 C880,866 925,862 950,850 C985,830 995,800 992,780 L940,782 L844,751 Z" fill="#0e63a1"/>
  <path d="M994,776 C1000,820 982,848 924,858 C955,832 966,806 962,782 Z" fill="#0a2f6f"/>
  <!-- sweater -->
  <path d="M850,574 C818,595 799,635 798,672 C797,700 800,740 811,766 L844,751 L940,783 L960,790 L962,740 L935,690 L905,640 L880,590 Z" fill="#a8cbe0"/>
  <!-- sweater dashes -->
  <g stroke="#0f5f9e" stroke-width="3" stroke-linecap="round">
   <line x1="815" y1="650" x2="829" y2="638"/>
   <line x1="855" y1="698" x2="866" y2="680"/>
   <line x1="883" y1="690" x2="883" y2="706"/>
   <line x1="823" y1="706" x2="836" y2="710"/>
   <line x1="859" y1="725" x2="872" y2="738"/>
   <line x1="826" y1="738" x2="827" y2="748"/>
   <line x1="911" y1="748" x2="922" y2="740"/>
   <line x1="799" y1="680" x2="806" y2="680"/>
   <line x1="800" y1="722" x2="803" y2="726"/>
   <line x1="838" y1="586" x2="846" y2="586"/>
  </g>
  <!-- hair -->
  <path d="M846,570 C848,556 858,550 870,549 C878,548 884,545 886,530 C892,510 915,502 950,502 C968,501 980,497 1000,502 C1020,510 1030,530 1031,560 C1032,585 1027,600 1027,610 L990,630 L935,660 C925,665 910,668 900,665 C870,658 852,640 847,610 Z" fill="#0a2f6f"/>
  <path d="M918,612 C925,600 935,598 945,604 L952,625 L925,650 Z" fill="#a8cbe0"/>
  <!-- face -->
  <path d="M963,545 C985,548 1006,560 1006,575 C1005,595 990,605 973,607 C955,608 938,606 928,604 C932,585 945,555 963,545 Z" fill="#f8b48e"/>
  <path d="M963,545 C975,560 990,570 1006,572 C1008,560 1000,548 990,540 C980,536 968,538 963,545 Z" fill="#0a2f6f"/>
  <ellipse cx="953" cy="565" rx="8.5" ry="10" fill="#e5715c"/>
  <ellipse cx="977" cy="599" rx="9" ry="6.5" fill="#e5715c"/>
  <path d="M929,592 C928,600 932,606 937,608 L942,606 C936,600 934,594 933,588 Z" fill="#e5715c"/>
  <g stroke="#1e2d5c" stroke-width="1.5" fill="none" stroke-linecap="round">
   <path d="M964,559 C965,565 968,570 972,572"/>
   <path d="M980,585 C983,590 987,593 991,594"/>
   <path d="M948,588 C951,590 953,593 954,596"/>
  </g>
  <!-- front leg -->
  <path d="M960,609 C985,606 1002,615 1008,640 C1020,700 1032,760 1038,836 L1010,840 C995,810 990,795 980,785 C960,760 940,740 918,700 C905,680 905,660 912,650 C925,630 940,612 960,609 Z" fill="#0f62a0"/>
  <!-- hand -->
  <path d="M940,765 L963,763 C972,775 980,790 984,800 C970,798 950,790 937,782 Z" fill="#f8b48e"/>
  <!-- feet -->
  <path d="M1040,812 L1066,805 C1078,816 1092,830 1100,843 L1060,840 Z" fill="#f8b48e"/>
  <path d="M1037,817 C1048,832 1070,842 1097,843 C1103,842 1102,839 1100,836 C1110,840 1117,848 1115,855 C1108,861 1085,861 1060,851 C1044,844 1035,831 1037,817 Z" fill="#0a2f6f"/>
  <path d="M1012,837 L1038,832 C1050,845 1062,855 1073,864 L1030,864 Z" fill="#f8b48e"/>
  <path d="M1009,847 C1021,862 1045,868 1068,866 C1072,864 1071,861 1069,859 C1082,865 1091,872 1089,879 C1079,886 1048,885 1026,875 C1012,868 1005,858 1009,847 Z" fill="#0a2f6f"/>
  <!-- title -->
  <g font-family="Liberation Sans" font-size="56" fill="#f1f2f2" text-anchor="middle">
   <text x="1050" y="370" textLength="603" lengthAdjust="spacingAndGlyphs">КОЛИ ТРИВОГА НЕ ДАЄ</text>
   <text x="1048" y="444" textLength="554" lengthAdjust="spacingAndGlyphs">ДИХАТИ ТА ДУМАТИ.</text>
  </g>
 </g></svg>
 <!-- SLIDE_PLACEHOLDER -->

 <!-- notes -->
 <div class="a" style="left:174px;top:790px;width:912px;height:5px;background:#eceef1;border-top:1px solid #b8bdc5;border-bottom:1px solid #b8bdc5"></div>
 <div class="a" style="left:174px;top:795px;width:898px;height:29px;background:#fff"></div>
 <div class="a" style="left:1072px;top:795px;width:14px;height:29px;background:#eef0f2"></div>
 <div class="a" style="left:1074px;top:798px;width:0;height:0;border-left:5px solid transparent;border-right:5px solid transparent;border-bottom:4px solid #bbb"></div>
 <div class="a" style="left:1074px;top:813px;width:0;height:0;border-left:5px solid transparent;border-right:5px solid transparent;border-top:4px solid #bbb"></div>
 <div class="a" style="left:182px;top:799px;font-size:13.4px;color:#333;white-space:nowrap">Заметки к слайду</div>

 <!-- status bar -->
 <div class="a" style="left:0;top:824px;width:1086px;height:19px;background:linear-gradient(#eceef1,#d9dde3);border-top:1px solid #b5bac2"></div>
 <div class="a" style="left:7px;top:828px;font-size:9.1px;color:#444;white-space:nowrap">Слайд 1 из 25</div>
 <div class="a" style="left:76px;top:826px;width:1px;height:16px;background:#b9bec6"></div>
 <div class="a" style="left:84px;top:828px;font-size:9.4px;color:#444;white-space:nowrap">"2_Тема Office"</div>
 <div class="a" style="left:157px;top:826px;width:1px;height:16px;background:#b9bec6"></div>
 <svg class="a" style="left:163px;top:826px" width="18" height="15" viewBox="0 0 18 15"><path d="M1 9 L8 13 L17 8 L10 4 Z" fill="#7d9be0" stroke="#3a5aa8" stroke-width="0.8"/><path d="M2 8.5 L8 11.5 L15.5 7.5" fill="none" stroke="#fff" stroke-width="0.8"/><path d="M6 5 L9 8.5 L15 1" fill="none" stroke="#e02a2a" stroke-width="2"/></svg>
 <div class="a" style="left:192px;top:827px;font-size:10.4px;color:#444;white-space:nowrap">украинский</div>
 <div class="a" style="left:256px;top:826px;width:1px;height:16px;background:#b9bec6"></div>
 <div class="a" style="left:843px;top:826px;width:1px;height:16px;background:#a9aeb6"></div>
 <div class="a" style="left:849px;top:826px;width:16px;height:16px;background:#ffe9a0;border:1px solid #e6b84a;border-radius:2px"></div>
 <div class="a" style="left:852px;top:829px;width:10px;height:9px;border:1.5px solid #333"></div>
 <div class="a" style="left:857px;top:829px;width:1.5px;height:9px;background:#333"></div>
 <div class="a" style="left:869px;top:829px;width:4px;height:4px;border:1px solid #444;box-shadow:6px 0 0 -0px #d9dde3"></div>
 <div class="a" style="left:875px;top:829px;width:4px;height:4px;border:1px solid #444"></div>
 <div class="a" style="left:869px;top:835px;width:4px;height:4px;border:1px solid #444"></div>
 <div class="a" style="left:875px;top:835px;width:4px;height:4px;border:1px solid #444"></div>
 <div class="a" style="left:883px;top:829px;width:10px;height:9px;border:1px solid #777"></div>
 <div class="a" style="left:899px;top:829px;width:10px;height:3px;border:1px solid #555"></div>
 <div class="a" style="left:903px;top:832px;width:2px;height:6px;background:#555"></div>
 <div class="a" style="left:920px;top:828px;font-size:9px;color:#333">100%</div>
 <div class="a" style="left:951px;top:827px;width:13px;height:13px;border:1px solid #888;border-radius:50%;background:#f4f4f6"></div>
 <div class="a" style="left:954px;top:833px;width:7px;height:1.5px;background:#444"></div>
 <div class="a" style="left:964px;top:833px;width:85px;height:1px;background:#9aa0a8"></div>
 <div class="a" style="left:1001px;top:828px;width:7px;height:10px;background:#f5f5f5;border:1px solid #777;border-radius:1px 1px 3px 3px"></div>
 <div class="a" style="left:1048px;top:827px;width:13px;height:13px;border:1px solid #888;border-radius:50%;background:#f4f4f6"></div>
 <div class="a" style="left:1051px;top:833px;width:7px;height:1.5px;background:#444"></div>
 <div class="a" style="left:1054px;top:830px;width:1.5px;height:7px;background:#444"></div>
 <div class="a" style="left:1067px;top:827px;width:14px;height:14px;border:1px solid #888;background:#eceef1"></div>
</div>

<!-- thumbs -->
<div class="a" style="left:420px;top:262px;width:150px;height:104px;background:linear-gradient(#fbe7a4,#f8d66c 50%,#fbe49a);border:1px solid #e7bf5c"></div>
<div class="num" style="top:268px;font-family:Liberation Serif;font-size:13px;color:#111">1</div>
<div class="num" style="top:376px;">2</div>
<div class="num" style="top:484px;">3</div>
<div class="a" style="left:423px;top:591px;width:9px;height:11px;border:1px solid #555;background:#ddd;font-size:9px;line-height:9px;text-align:center;color:#222">4</div>
<div class="num" style="top:699px;">5</div>
<div class="num" style="top:807px;">6</div>
<div class="num" style="top:915px;">7</div>
<svg class="a" style="left:437px;top:265px;box-shadow:0 0 0 1px #e9d9a0" width="129" height="97" viewBox="644 298 815 611" font-weight="normal"><use href="#slideart"/></svg>
<div class="thumb" style="top:373px">
 <div class="a" style="left:7px;top:6px;width:119px;height:33px;border-radius:5px;background:linear-gradient(#f7c080,#f39a50 60%,#f08838)"></div>
 
 <svg class="a" style="left:0;top:0" width="129" height="97" font-family="Liberation Sans"><text x="18" y="15" textLength="98" lengthAdjust="spacingAndGlyphs" font-size="5.2" fill="#c0301e" font-weight="bold" stroke="#b8281a" stroke-width="0.35">«Життя – це не чекати, коли</text><text x="16" y="22" textLength="102" lengthAdjust="spacingAndGlyphs" font-size="5.2" fill="#c0301e" font-weight="bold" stroke="#b8281a" stroke-width="0.35">закінчиться буря. Це вчитися</text><text x="8" y="29.5" textLength="117" lengthAdjust="spacingAndGlyphs" font-size="5.2" fill="#b02818" font-weight="bold" stroke="#b8281a" stroke-width="0.35">танцювати під дощем» – Вівіан Грін</text></svg><div class="a" style="left:27px;top:40px;width:78px;height:52px;overflow:hidden;background:linear-gradient(#f2f2f0 0%,#e6e6e2 35%,#d8d8d2 55%,#9fb2b4 58%,#b8c4c2 72%,#c8c6be 80%,#b8b0a2 100%)">
 <div class="a" style="left:0;top:28px;width:40px;height:14px;background:radial-gradient(ellipse,#f8f8f4,transparent 70%)"></div>
 <div class="a" style="left:43px;top:16px;width:4px;height:6px;background:#3a3a3a;border-radius:50%"></div>
 <div class="a" style="left:42px;top:21px;width:6px;height:12px;background:#d8d8d8;border-radius:2px"></div>
 <div class="a" style="left:44px;top:32px;width:2px;height:14px;background:#3a3a3a;transform:rotate(4deg)"></div>
 <div class="a" style="left:30px;top:27px;width:14px;height:2px;background:#3a3a3a;transform:rotate(-30deg)"></div>
 <div class="a" style="left:46px;top:19px;width:10px;height:1.5px;background:#3a3a3a;transform:rotate(-10deg)"></div>
</div>
</div>
<div class="thumb" style="top:481px">
 <div class="a" style="left:5px;top:6px;width:62px;height:43px;background:linear-gradient(90deg,#b7cdf0,#dce8fa)"></div>
 
 <svg class="a" style="left:0;top:0" width="129" height="97" font-family="Liberation Sans"><text x="6" y="11" textLength="44" lengthAdjust="spacingAndGlyphs" font-size="4" fill="#111" font-weight="bold">Тривога — це природна</text><text x="6" y="16" textLength="48" lengthAdjust="spacingAndGlyphs" font-size="4" fill="#111" font-weight="bold">реакція організму на</text><text x="6" y="21" textLength="32" lengthAdjust="spacingAndGlyphs" font-size="4" fill="#111" font-weight="bold">небезпеку або</text><text x="6" y="26" textLength="50" lengthAdjust="spacingAndGlyphs" font-size="4" fill="#111" font-weight="bold">невизначеність. Вона</text><text x="6" y="31" textLength="55" lengthAdjust="spacingAndGlyphs" font-size="4" fill="#111" font-weight="bold">допомагає мобілізувати</text><text x="6" y="36" textLength="56" lengthAdjust="spacingAndGlyphs" font-size="4" fill="#111" font-weight="bold">ресурси, але її надмірна</text><text x="6" y="41" textLength="55" lengthAdjust="spacingAndGlyphs" font-size="4" fill="#111" font-weight="bold">кількість може шкодити</text><text x="6" y="46" textLength="52" lengthAdjust="spacingAndGlyphs" font-size="4" fill="#111" font-weight="bold">здоров'ю та самопочуттю</text><text x="31" y="60" textLength="70" lengthAdjust="spacingAndGlyphs" font-size="4.4" fill="#111" font-weight="bold">Як тривога впливає на наш організм?</text><text x="22" y="67" textLength="92" lengthAdjust="spacingAndGlyphs" font-size="3.8" fill="#222" font-weight="bold">Серцебиття прискорюється, дихання стає частим,</text><text x="22" y="72" textLength="82" lengthAdjust="spacingAndGlyphs" font-size="3.8" fill="#222" font-weight="bold">м'язи напружуються, з'являється "ком у горлі",</text><text x="22" y="77" textLength="30" lengthAdjust="spacingAndGlyphs" font-size="3.8" fill="#222" font-weight="bold">порушується сон.</text></svg><div class="a" style="left:67px;top:6px;width:59px;height:43px;background:#2b3e52;overflow:hidden">
 <div class="a" style="left:9px;top:18px;width:14px;height:30px;background:#4d7fa6;border-radius:40% 40% 0 0"></div>
 <div class="a" style="left:36px;top:16px;width:16px;height:30px;background:#3d6f96;border-radius:40% 40% 0 0"></div>
 <div class="a" style="left:22px;top:20px;width:16px;height:28px;background:#e0553c;border-radius:40% 40% 0 0"></div>
 <div class="a" style="left:12px;top:9px;width:8px;height:9px;background:#d8a088;border-radius:50%"></div>
 <div class="a" style="left:11px;top:7px;width:10px;height:5px;background:#2a1e1e;border-radius:50% 50% 0 0"></div>
 <div class="a" style="left:25px;top:10px;width:9px;height:10px;background:#e0aa90;border-radius:50%"></div>
 <div class="a" style="left:23px;top:8px;width:13px;height:6px;background:#2a1e1e;border-radius:50% 50% 20% 20%"></div>
 <div class="a" style="left:39px;top:8px;width:8px;height:9px;background:#d49c84;border-radius:50%"></div>
 <div class="a" style="left:44px;top:6px;width:9px;height:4px;background:#3a6a90;transform:rotate(-25deg)"></div>
 <div class="a" style="left:24px;top:0px;width:8px;height:9px;background:#f0f0f0;border-radius:30% 30% 50% 50%"></div>
 <div class="a" style="left:3px;top:31px;width:7px;height:8px;background:#f0f0f0;border-radius:30% 30% 50% 50%"></div>
 <div class="a" style="left:43px;top:28px;width:8px;height:9px;background:#f0f0f0;border-radius:30% 30% 50% 50%"></div>
</div>
<div class="a" style="left:20px;top:50px;width:96px;height:39px;background:linear-gradient(#fbfbd8,#cdeeb0);border:1px solid #a8c088"></div><svg class="a" style="left:0;top:0" width="129" height="97" font-family="Liberation Sans"><text x="31" y="60" textLength="70" lengthAdjust="spacingAndGlyphs" font-size="4.4" fill="#111" font-weight="bold">Як тривога впливає на наш організм?</text><text x="22" y="67" textLength="92" lengthAdjust="spacingAndGlyphs" font-size="3.8" fill="#222" font-weight="bold">Серцебиття прискорюється, дихання стає частим,</text><text x="22" y="72" textLength="82" lengthAdjust="spacingAndGlyphs" font-size="3.8" fill="#222" font-weight="bold">м'язи напружуються, з'являється "ком у горлі",</text><text x="22" y="77" textLength="30" lengthAdjust="spacingAndGlyphs" font-size="3.8" fill="#222" font-weight="bold">порушується сон.</text></svg>
 
</div>
<div class="thumb" style="top:588px;background:#fdfbee">
<svg class="a" style="left:0;top:0;filter:blur(0.35px)" width="129" height="97" viewBox="0 0 129 97">
 <path d="M30,92 C28,80 24,72 26,62 C20,58 24,50 27,46 C28,30 45,10 70,10 C92,10 100,30 99,45 C98,58 90,68 84,76 L86,92" fill="#fcf3ee" stroke="#efdcd8" stroke-width="1.2"/>
 <ellipse cx="64" cy="33" rx="32" ry="19" fill="#f0d6e0"/>
 <ellipse cx="64" cy="33" rx="26" ry="14" fill="none" stroke="#e0b4c8" stroke-width="2"/>
 <ellipse cx="60" cy="34" rx="14" ry="7" fill="#dcc8e8" stroke="#c8d4f4" stroke-width="1.5"/>
 <ellipse cx="61" cy="36" rx="9" ry="4.5" fill="#8098cc"/>
 <path d="M48,45 C55,48 62,46 66,44 L72,46 C70,52 60,53 50,50 Z" fill="#e8b8c0"/>
 <ellipse cx="78" cy="48" rx="9" ry="10" fill="#c2a6de"/>
 <path d="M63,42 L71,42 L74,76 L68,76 Z" fill="#f0d890"/>
 <g stroke="#b8b8b8" stroke-width="1.3">
  <line x1="12" y1="24" x2="39" y2="24"/><line x1="22" y1="28" x2="30" y2="28"/>
  <line x1="93" y1="17" x2="114" y2="17"/>
  <line x1="96" y1="62" x2="112" y2="62"/><line x1="94" y1="68" x2="109" y2="68"/>
 </g>
 <g stroke="#d8c8a8" stroke-width="1.2">
  <line x1="33" y1="55" x2="46" y2="55"/><line x1="35" y1="63" x2="49" y2="63"/><line x1="36" y1="70" x2="60" y2="70"/>
 </g>
</svg>
</div>
<div class="thumb" style="top:696px"><svg class="a" style="left:0;top:0" width="129" height="97" font-family="Liberation Sans"><text x="7" y="10" textLength="114" lengthAdjust="spacingAndGlyphs" font-size="3.6" fill="#222" font-weight="bold">Запрошуємо вас до кількох простих вправ на усвідомлення</text><text x="7" y="15" textLength="70" lengthAdjust="spacingAndGlyphs" font-size="3.6" fill="#222" font-weight="bold">тривоги та її впливу на ваше життя:</text><text x="7" y="26" textLength="114" lengthAdjust="spacingAndGlyphs" font-size="3.4" fill="#333" font-weight="bold">1. Чи помічаєте ви, що тривога заважає вам спокійно</text><text x="7" y="31" textLength="20" lengthAdjust="spacingAndGlyphs" font-size="3.4" fill="#333" font-weight="bold">відпочити?</text><text x="7" y="41" textLength="96" lengthAdjust="spacingAndGlyphs" font-size="3.4" fill="#333" font-weight="bold">2. Чи виникають у вас труднощі з концентрацією уваги?</text><text x="7" y="51" textLength="114" lengthAdjust="spacingAndGlyphs" font-size="3.4" fill="#333" font-weight="bold">3. Чи помічаєте у себе фізичні симптоми, коли тривожитесь</text><text x="7" y="56" textLength="100" lengthAdjust="spacingAndGlyphs" font-size="3.4" fill="#333" font-weight="bold">(серцебиття, пітливість, біль у голові чи животі)?</text><text x="7" y="66" textLength="114" lengthAdjust="spacingAndGlyphs" font-size="3.4" fill="#333" font-weight="bold">4. Чи часто ви прокручуєте у голові негативні сценарії</text><text x="7" y="71" textLength="26" lengthAdjust="spacingAndGlyphs" font-size="3.4" fill="#333" font-weight="bold">майбутнього?</text><text x="7" y="81" textLength="114" lengthAdjust="spacingAndGlyphs" font-size="3.4" fill="#333" font-weight="bold">5. Чи уникаєте ви певних ситуацій через тривогу, які раніше</text><text x="7" y="86" textLength="26" lengthAdjust="spacingAndGlyphs" font-size="3.4" fill="#333" font-weight="bold">вам подобались?</text></svg>
 
 
 
</div>
<div class="thumb" style="top:804px"><svg class="a" style="left:0;top:0" width="129" height="97" font-family="Liberation Sans"><text x="27" y="17" textLength="22" lengthAdjust="spacingAndGlyphs" font-size="4.2" fill="#c03020" font-weight="bold">Пам'ятка</text><text x="12" y="29" textLength="57" lengthAdjust="spacingAndGlyphs" font-size="3.4" fill="#333" font-weight="bold">Вдих "4-4" — зниження рівня</text><text x="7" y="34" textLength="22" lengthAdjust="spacingAndGlyphs" font-size="3.4" fill="#333" font-weight="bold">тривожності</text><text x="12" y="46" textLength="57" lengthAdjust="spacingAndGlyphs" font-size="3.4" fill="#333" font-weight="bold">Вдих "4-7-8" — швидке заспокоєння,</text><text x="7" y="51" textLength="62" lengthAdjust="spacingAndGlyphs" font-size="3.4" fill="#333" font-weight="bold">зменшення напруги та покращення</text><text x="7" y="56" textLength="24" lengthAdjust="spacingAndGlyphs" font-size="3.4" fill="#333" font-weight="bold">якості сну.</text><text x="12" y="68" textLength="57" lengthAdjust="spacingAndGlyphs" font-size="3.4" fill="#333" font-weight="bold">Вдих "5-5" — зниження рівня</text><text x="7" y="73" textLength="22" lengthAdjust="spacingAndGlyphs" font-size="3.4" fill="#333" font-weight="bold">тривожності</text></svg>
 
 
 <div class="a" style="left:72px;top:5px;width:50px;height:37px;background:#fbfbfd;overflow:hidden">
 <div class="a" style="left:4px;top:8px;width:12px;height:7px;background:#b8bcc8;border-radius:50%;filter:blur(0.5px)"></div>
 <div class="a" style="left:14px;top:4px;width:20px;height:24px;background:#6a6fbe;border-radius:50% 50% 30% 45%"></div>
 <div class="a" style="left:20px;top:26px;width:12px;height:10px;background:#6a6fbe"></div>
 <div class="a" style="left:31px;top:14px;width:4px;height:6px;background:#6a6fbe;border-radius:0 50% 50% 0"></div>
 <div class="a" style="left:18px;top:9px;width:11px;height:11px;border:1.5px solid #3e3a8a;border-radius:50%"></div>
 <div class="a" style="left:21px;top:12px;width:5px;height:5px;border:1px solid #d04870;border-radius:50%"></div>
 <div class="a" style="left:9px;top:20px;width:3px;height:12px;background:#c84a3a"></div>
 <div class="a" style="left:9px;top:30px;width:3px;height:6px;background:#2a3a6a"></div>
 <div class="a" style="left:36px;top:4px;width:14px;height:12px;background:radial-gradient(#f0e0d8,transparent 70%)"></div>
 <div class="a" style="left:40px;top:24px;width:2px;height:10px;background:#3a4a7a"></div>
</div>
</div>
<div class="a" style="left:437px;top:912px;width:129px;height:86px;background:#fdfcc0;overflow:hidden">
 <div class="a" style="left:6px;top:4px;width:80px;height:43px;border-radius:5px;background:linear-gradient(#9c9890,#8e8a82 85%,#7e7a70)"></div>
 <svg class="a" style="left:6px;top:4px" width="80" height="43"><rect x="32" y="3" width="10" height="2" fill="#555"/><path d="M36 6 L12 38 M38 6 L62 38" stroke="#3a3a3a" stroke-width="1"/><circle cx="13" cy="37" r="1.2" fill="#333"/><circle cx="61" cy="37" r="1.2" fill="#333"/><rect x="0" y="38" width="80" height="1" fill="#6a665e"/></svg>
 <div class="a" style="left:44px;top:49px;width:85px;height:45px;background:#fcfcfd"></div>
 <div class="a" style="left:69px;top:52px;width:36px;height:34px;border-radius:50%;background:radial-gradient(circle,#f3dccc 0 25%,#e8e4ea 45%,#eeeef2 70%,transparent 72%);filter:blur(0.5px)"></div>
 <div class="a" style="left:54px;top:51px;width:10px;height:10px;background:#f2dccc;border-radius:50%;filter:blur(0.8px)"></div>
 <div class="a" style="left:59px;top:63px;width:4px;height:4px;background:#3a4a7a;border-radius:50%"></div>
 <div class="a" style="left:57px;top:67px;width:7px;height:10px;background:#8a90d0;border-radius:30%"></div>
 <div class="a" style="left:59px;top:76px;width:2px;height:10px;background:#22305a"></div>
 <div class="a" style="left:63px;top:76px;width:2px;height:10px;background:#22305a"></div>
 <div class="a" style="left:72px;top:73px;width:24px;height:6px;background:#3d5fa8;border-radius:50%"></div>
 <div class="a" style="left:94px;top:71px;width:4px;height:4px;background:#222;border-radius:50%"></div>
 <div class="a" style="left:48px;top:79px;width:70px;height:8px;background:linear-gradient(90deg,transparent,#e6e8ee 15%,#e4e8f0 80%,transparent);filter:blur(0.8px)"></div>
</div>
<!-- taskbar -->
<div class="a" style="left:0;top:1020px;width:1920px;height:60px;background:linear-gradient(90deg,#e3ebf5 0%,#e4ecf7 12%,#d7e3f8 25%,#dce2f5 45%,#dde2f4 60%,#dde2f2 75%,#e5edf7 83%,#e6eef7 100%);border-top:1px solid #b4b9c2"></div>
<!-- weather -->
<svg class="a" style="left:22px;top:1034px" width="36" height="32" viewBox="0 0 36 32"><defs><linearGradient id="sun" x1="0" y1="0" x2="0" y2="1"><stop offset="0" stop-color="#ffb63a"/><stop offset="1" stop-color="#f08a1c"/></linearGradient><linearGradient id="cl" x1="0" y1="0" x2="0" y2="1"><stop offset="0" stop-color="#f4f7fc"/><stop offset="1" stop-color="#aebfe0"/></linearGradient></defs><circle cx="23" cy="11" r="7.5" fill="url(#sun)"/><path d="M6 27 C1 27 1 19 7 19 C8 13 15 11 19 15 C22 12 29 14 29 20 C34 20 34 27 29 27 Z" fill="url(#cl)" stroke="#c6d2ea" stroke-width="0.6"/></svg>
<div class="a" style="left:64px;top:1031px;font-size:14px;color:#1f1f1f">18°C</div>
<div class="a" style="left:64px;top:1051px;font-size:15.4px;color:#444">Mostly cloudy</div>
<!-- start -->
<svg class="a" style="left:503px;top:1036px" width="29" height="29" viewBox="0 0 29 29"><defs><linearGradient id="win" x1="0" y1="0" x2="1" y2="1"><stop offset="0" stop-color="#4cc2ff"/><stop offset="1" stop-color="#0067c8"/></linearGradient></defs><path d="M0 1.5a1.5 1.5 0 0 1 1.5-1.5H14V14H0Z M15 0H27.5A1.5 1.5 0 0 1 29 1.5V14H15Z M0 15H14V29H1.5A1.5 1.5 0 0 1 0 27.5Z M15 15H29V27.5A1.5 1.5 0 0 1 27.5 29H15Z" fill="url(#win)"/></svg>
<!-- search -->
<div class="a" style="left:549px;top:1031px;width:272px;height:38px;border-radius:19px;background:linear-gradient(90deg,#f3f6fb,#eef2fa);border:1px solid #d4d9e4"></div>
<svg class="a" style="left:563px;top:1040px" width="20" height="20" viewBox="0 0 20 20"><circle cx="8" cy="8" r="6.3" fill="none" stroke="#1b1b1b" stroke-width="2"/><path d="M12.6 12.6L18 18" stroke="#1b1b1b" stroke-width="2.2" stroke-linecap="round"/></svg>
<div class="a" style="left:594px;top:1041px;font-size:17.5px;color:#555">Пошук</div>
<!-- task view -->
<div class="a" style="left:851px;top:1036px;width:18px;height:18px;background:linear-gradient(135deg,#fafafa,#d8d8d8);border-radius:2px"></div>
<div class="a" style="left:839px;top:1044px;width:22px;height:20px;background:linear-gradient(135deg,#c8c8c8 0,#c8c8c8 50%,#1e1e1e 50%);border-radius:2px"></div>
<div class="a" style="left:839px;top:1044px;width:22px;height:20px;background:#202020;border-radius:2px"></div>
<div class="a" style="left:845px;top:1044px;width:16px;height:14px;background:linear-gradient(135deg,#e8e8e8,#bdbdbd)"></div>
<!-- whatsapp -->
<svg class="a" style="left:893px;top:1035px" width="32" height="32" viewBox="0 0 32 32"><path d="M16 3a13 13 0 0 0-11.2 19.6L3 29l6.6-1.7A13 13 0 1 0 16 3Z" fill="none" stroke="#1f8a52" stroke-width="2.8"/><path d="M11.5 9.5c-1 .5-2 2-1.6 3.6.6 2.6 3.6 6.2 6.8 7.4 1.6.6 3.2 0 3.9-1.1l.3-1.2-2.8-1.4-1.2 1.2c-1.4-.5-3.2-2.2-3.8-3.7l1.1-1.3-1.2-2.8Z" fill="#1f8a52"/></svg>
<!-- viber -->
<svg class="a" style="left:948px;top:1035px" width="30" height="32" viewBox="0 0 30 32"><path d="M15 2.5C6.5 2.5 3 6.5 3 14c0 6 2 8.8 5 10.2V29.5l4.3-4.3c.9.1 1.8.1 2.7.1 8.5 0 12-4 12-11.3S23.5 2.5 15 2.5Z" fill="#7360f2" stroke="#fff" stroke-width="1.8"/><path d="M10.2 8.8c-.9.6-1.2 1.9-.7 3.2 1.3 3.6 4.2 6.6 7.8 7.9 1.2.4 2.4.2 3.1-.7l.3-.9-2.4-1.6-1.1 1c-1.6-.7-3.2-2.3-3.9-3.9l1-1.1-1.5-2.5Z" fill="#fff"/><path d="M16 7.5a5 5 0 0 1 4.5 4.5M16 5.3a7.3 7.3 0 0 1 6.7 6.7" stroke="#fff" stroke-width="1" fill="none"/></svg>
<div class="a" style="left:961px;top:1070px;width:7px;height:3px;border-radius:2px;background:#7d8592"></div>
<!-- chrome -->
<svg class="a" style="left:1004px;top:1035px" width="30" height="30" viewBox="0 0 30 30"><path d="M15,15 L2.44,7.75 A14.5,14.5 0 0 1 27.56,7.75 Z" fill="#db4437"/><path d="M15,15 L27.56,7.75 A14.5,14.5 0 0 1 15.00,29.50 Z" fill="#f4c20d"/><path d="M15,15 L15.00,29.50 A14.5,14.5 0 0 1 2.44,7.75 Z" fill="#0f9d58"/><circle cx="15" cy="15" r="6.8" fill="#fff"/><circle cx="15" cy="15" r="5.4" fill="#3b7de9"/></svg>
<!-- edge -->
<svg class="a" style="left:1059px;top:1035px" width="30" height="30" viewBox="0 0 30 30"><defs><linearGradient id="edg" x1="0" y1="0" x2="1" y2="1"><stop offset="0" stop-color="#3ccbe8"/><stop offset="1" stop-color="#1a8c5a"/></linearGradient></defs><path d="M15 1C23 1 29 7 29 14c0 5-4 7-7 7-4 0-5-2-5-4 0-3-2-5-5-5-5 0-10 4-11 9C1 8 7 1 15 1Z" fill="url(#edg)"/><path d="M1 16c0 8 6 13 13 13 5 0 9-2 11-5-5 2-11 0-12-5" fill="#2f73c8"/><rect x="0.5" y="15" width="14" height="14" rx="1.5" fill="#c77a2a"/><rect x="0.5" y="21" width="14" height="2" fill="#8a4a14"/></svg>
<!-- files -->
<svg class="a" style="left:1114px;top:1036px" width="30" height="28" viewBox="0 0 30 28"><path d="M0 3a2 2 0 0 1 2-2h8l3 3h15a2 2 0 0 1 2 2v2H0Z" fill="#e9b22a"/><rect x="0" y="5" width="30" height="23" rx="1.5" fill="#fdd55b"/><rect x="0" y="17" width="30" height="11" fill="#f8c640"/><rect x="8" y="19" width="14" height="6" rx="1" fill="#2f7ed8"/></svg>
<!-- store -->
<svg class="a" style="left:1169px;top:1034px" width="30" height="31" viewBox="0 0 30 31"><path d="M9 7V5a6 6 0 0 1 12 0v2" fill="none" stroke="#3aa0e8" stroke-width="2.2"/><rect x="0" y="7" width="30" height="24" rx="3" fill="#1f5fa8"/><rect x="9" y="12" width="5.5" height="5.5" fill="#f25022"/><rect x="15.5" y="12" width="5.5" height="5.5" fill="#7fba00"/><rect x="9" y="18.5" width="5.5" height="5.5" fill="#00a4ef"/><rect x="15.5" y="18.5" width="5.5" height="5.5" fill="#ffb900"/></svg>
<!-- outlook -->
<svg class="a" style="left:1224px;top:1036px" width="30" height="28" viewBox="0 0 30 28"><path d="M8 5 L20 1 L30 6 V24 H8Z" fill="#1a70c8"/><path d="M12 12 L30 12 V27 H12Z" fill="#5ac0f0"/><path d="M12 12 L21 20 L30 12" fill="#2a8ee0"/><rect x="0" y="7" width="15" height="15" rx="2" fill="#0a5aaf"/><ellipse cx="7.5" cy="14.5" rx="4" ry="4.6" fill="none" stroke="#fff" stroke-width="2.2"/></svg>
<!-- opera -->
<svg class="a" style="left:1279px;top:1035px" width="29" height="30" viewBox="0 0 29 30"><ellipse cx="14.5" cy="15" rx="14" ry="14.5" fill="#e3192b"/><ellipse cx="14.5" cy="15" rx="6" ry="10.5" fill="#f4f6fb"/></svg>
<!-- firefox -->
<svg class="a" style="left:1334px;top:1035px" width="30" height="30" viewBox="0 0 30 30"><defs><radialGradient id="ff" cx="0.6" cy="0.2" r="0.9"><stop offset="0" stop-color="#ffe040"/><stop offset="0.45" stop-color="#ff8a1e"/><stop offset="1" stop-color="#e22850"/></radialGradient></defs><circle cx="15" cy="16" r="13.5" fill="url(#ff)"/><path d="M22 2c3 3 5 7 5 10" stroke="#ffd23a" stroke-width="3" fill="none"/><circle cx="15" cy="15" r="6.5" fill="#6a2fc0"/><circle cx="13.5" cy="14" r="4" fill="#8a4ae0"/></svg>
<div class="a" style="left:1345px;top:1070px;width:7px;height:3px;border-radius:2px;background:#7d8592"></div>
<!-- zoom -->
<div class="a" style="left:1389px;top:1035px;width:30px;height:30px;border-radius:50%;background:radial-gradient(circle at 50% 40%,#2f7af8,#0b52d8);color:#fff;font-size:8px;font-weight:bold;text-align:center;line-height:30px">zoom</div>
<div class="a" style="left:1401px;top:1070px;width:7px;height:3px;border-radius:2px;background:#7d8592"></div>
<!-- tray -->
<svg class="a" style="left:1591px;top:1043px" width="16" height="10" viewBox="0 0 16 10"><path d="M1.5 8.5L8 2L14.5 8.5" fill="none" stroke="#1b1b1b" stroke-width="1.8"/></svg>
<svg class="a" style="left:1625px;top:1039px" width="29" height="24" viewBox="0 0 29 24"><rect x="3.5" y="1" width="5" height="10" rx="2.5" fill="none" stroke="#2d6ac8" stroke-width="1.6"/><path d="M1.5 8a4.5 4.5 0 0 0 9 0M6 12.5v3" fill="none" stroke="#2d6ac8" stroke-width="1.5"/><path d="M27 7L13 13.5L19.5 15L21 22Z" fill="none" stroke="#2d6ac8" stroke-width="1.6" stroke-linejoin="round"/></svg>
<div class="a" style="left:1672px;top:1042px;font-size:14.2px;color:#1b1b1b">ENG</div>
<svg class="a" style="left:1723px;top:1040px" width="22" height="18" viewBox="0 0 22 18"><path d="M1 6.5a14 14 0 0 1 20 0M4 9.8a9.5 9.5 0 0 1 14 0M7.2 13a5 5 0 0 1 7.6 0" fill="none" stroke="#1b1b1b" stroke-width="1.7" stroke-linecap="round"/><circle cx="11" cy="16" r="1.6" fill="#1b1b1b"/></svg>
<svg class="a" style="left:1753px;top:1040px" width="21" height="19" viewBox="0 0 21 19"><path d="M1.5 6.5H5L10 2V17L5 12.5H1.5Z" fill="none" stroke="#1b1b1b" stroke-width="1.5" stroke-linejoin="round"/><path d="M13 6.5a4 4 0 0 1 0 6M15.5 4a7.5 7.5 0 0 1 0 11" fill="none" stroke="#1b1b1b" stroke-width="1.5" stroke-linecap="round"/></svg>
<svg class="a" style="left:1783px;top:1039px" width="23" height="20" viewBox="0 0 23 20"><rect x="1.5" y="6.5" width="17" height="10" rx="2" fill="none" stroke="#1b1b1b" stroke-width="1.5"/><rect x="19.5" y="9.5" width="2.2" height="4" rx="1" fill="#1b1b1b"/><rect x="3" y="8" width="14" height="7" fill="#1b1b1b"/><path d="M8 0.5L4.5 7h3.5L6.5 11" fill="none" stroke="#1b1b1b" stroke-width="1.6"/><path d="M7.3 6.2L5.5 9" stroke="#e2e9f3" stroke-width="1"/></svg>
<div class="a" style="left:1800px;top:1032px;width:95px;text-align:right;font-size:14px;color:#1b1b1b">12:00</div>
<div class="a" style="left:1800px;top:1052px;width:95px;text-align:right;font-size:14px;color:#1b1b1b">16.04.2025</div>

</body></html>
